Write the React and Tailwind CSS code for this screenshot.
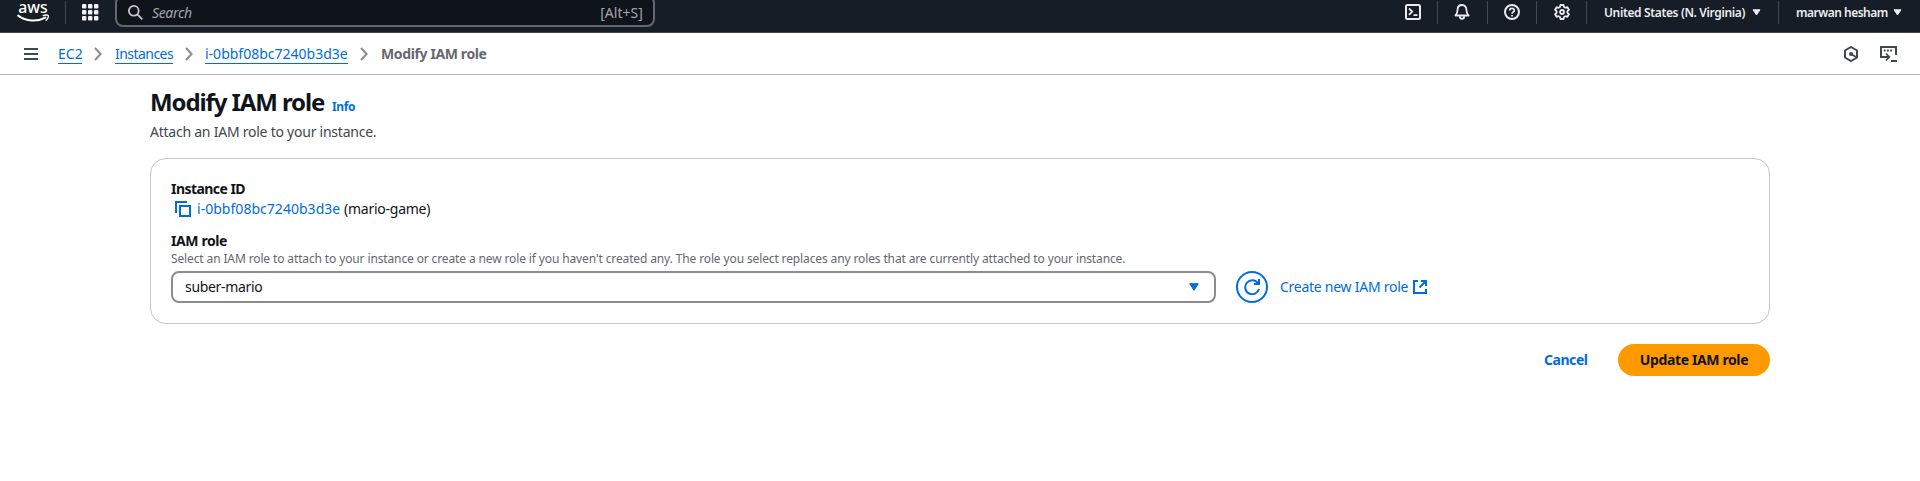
import React from "react";

function AwsLogo() {
  return (
    <svg width="32" height="24" viewBox="0 0 32 24" fill="none" className="block shrink-0">
      <text x="1.2" y="12.9" fontSize="12" transform="scale(1 1)" fontWeight="500" fontFamily="Noto Sans, sans-serif" fill="#fff" style={{ fontSize: "17px" }} textLength="29.500" lengthAdjust="spacingAndGlyphs">aws</text>
      <path d="M1.200 15.600C9 21.600 20.500 22 28.300 17.600" stroke="#fff" strokeWidth="2" strokeLinecap="round" />
      <path d="M26.200 15.700c2-.9 4.600-.9 5-.2.300.8-.5 3.300-2 4.800" stroke="#fff" strokeWidth="1.300" strokeLinecap="round" />
    </svg>
  );
}

function GridIcon() {
  const cells = [0, 6, 12];
  return (
    <svg width="17" height="17" viewBox="0 0 17 17" fill="#f3f3f7" className="block shrink-0">
      {cells.map((y) => cells.map((x) => <rect key={x + "-" + y} x={x} y={y} width="4.4" height="4.4" rx="1" />))}
    </svg>
  );
}

function Icon({ children, className = "" }) {
  return (
    <svg width="16" height="16" viewBox="0 0 16 16" fill="none" stroke="currentColor" strokeWidth="2" className={"block shrink-0 " + className}>
      {children}
    </svg>
  );
}

function Caret({ className = "" }) {
  return (
    <svg width="9" height="7" viewBox="0 0 9 7" className={"block shrink-0 " + className} fill="currentColor" stroke="currentColor" strokeLinejoin="round">
      <path d="M1 .8h7L4.5 6z" />
    </svg>
  );
}

function Chevron() {
  return (
    <svg width="8" height="14" viewBox="0 0 8 14" fill="none" stroke="#8c8c94" strokeWidth="2" className="block shrink-0">
      <path d="M1 1l5.6 6L1 13" />
    </svg>
  );
}

function NavDivider() {
  return <div className="h-[23px] w-px shrink-0 bg-[#424650]" />;
}

function TopNav() {
  return (
    <header className="h-[33px] overflow-hidden border-b border-[#424650] bg-[#161d26] text-[#ebebf0]">
      <div className="flex h-6 items-center">
        <div className="flex w-[65px] justify-start pl-[17px]"><AwsLogo /></div>
        <NavDivider />
        <div className="ml-4"><GridIcon /></div>
        <div className="-mt-[2px] ml-4 flex h-8 w-[540px] shrink-0 items-center rounded-lg border-2 border-[#656871] bg-[#0f141a] pr-[10px] pl-[11px]">
          <svg width="15" height="15" viewBox="0 0 15 15" fill="none" stroke="#c6c6cd" strokeWidth="1.8" className="mt-[2px] block">
            <circle cx="5.8" cy="5.8" r="4.9" />
            <path d="M9.4 9.4l4.9 4.9" />
          </svg>
          <span className="mt-[3px] ml-[9px] text-[14px] leading-5 tracking-[-0.35px] text-[#a4a4ad] italic">Search</span>
          <span className="mt-[3px] ml-auto text-[14px] leading-5 tracking-[0.05px] text-[#a4a4ad]">[Alt+S]</span>
        </div>
        <div className="ml-auto flex items-center">
          <Icon className="mr-4">
            <rect x="1" y="1" width="14" height="14" rx="1.5" />
            <path d="M4 4.5L7.2 7.6 4 10.8M8.5 11.2h4" strokeWidth="1.8" />
          </Icon>
          <NavDivider />
          <Icon className="mx-4">
            <path d="M8 1C5.2 1 3.6 3 3.6 5.6c0 3-.9 4.7-2.2 5.9h13.2c-1.3-1.2-2.2-2.9-2.2-5.9C12.4 3 10.8 1 8 1z" strokeLinejoin="round" strokeWidth="1.8" />
            <path d="M5.8 12.200c0 3.600 4.400 3.600 4.400 0" strokeWidth="1.8" />
          </Icon>
          <div className="w-px" />
          <NavDivider />
          <Icon className="mx-4">
            <circle cx="8" cy="8" r="7" />
            <path d="M5.700 6.600c0-3 4.600-3 4.600-.2C10.300 8 8 8 8 9.800" strokeWidth="1.7" />
            <path d="M8 10.900v1.700" strokeWidth="1.8" />
          </Icon>
          <NavDivider />
          <Icon className="mr-4 ml-[17px]">
            <path d="M6.500 1h3l.5 2 1.400.8 2-.6 1.500 2.600L13.400 7.200v1.600l1.500 1.400-1.500 2.600-2-.6-1.400.8-.5 2h-3L6 13l-1.400-.8-2 .6-1.500-2.600 1.500-1.400V7.200L1.100 5.800l1.500-2.600 2 .6L6 3z" strokeLinejoin="round" strokeWidth="1.8" />
            <circle cx="8" cy="8" r="2" strokeWidth="1.8" />
          </Icon>
          <NavDivider />
          <div className="flex w-[191px] items-center pl-[17px]">
            <span className="w-[142px] pt-px text-[12px] leading-4 font-semibold tracking-[-0.36px] whitespace-nowrap">United States (N. Virginia)</span>
            <Caret className="mt-px ml-[6px]" />
          </div>
          <NavDivider />
          <div className="flex w-[141px] items-center pl-[17px]">
            <span className="w-[91px] pt-px text-[12px] leading-4 font-semibold tracking-[-0.5px] whitespace-nowrap">marwan hesham</span>
            <Caret className="mt-px ml-[6px]" />
          </div>
        </div>
      </div>
    </header>
  );
}

function Breadcrumbs() {
  return (
    <div className="flex h-[42px] items-center border-b border-[#b4b4bb] bg-white pr-[23px] pl-6">
      <svg width="14" height="14" viewBox="0 0 14 14" stroke="#424650" strokeWidth="2" className="block shrink-0">
        <path d="M0 2h14M0 7h14M0 12h14" />
      </svg>
      <nav className="ml-5 flex items-center text-[14px] leading-5 whitespace-nowrap text-[#006ce0]">
        <a className="h-5 w-6 border-b border-[#006ce0] leading-5">EC2</a>
        <div className="w-[33px] pl-3"><Chevron /></div>
        <a className="h-5 w-[58px] border-b border-[#006ce0] leading-5 tracking-[-0.54px]">Instances</a>
        <div className="w-8 pl-3"><Chevron /></div>
        <a className="h-5 w-[143px] border-b border-[#006ce0] leading-5">i-0bbf08bc7240b3d3e</a>
        <div className="w-[33px] pl-3"><Chevron /></div>
        <span className="font-bold tracking-[-0.38px] text-[#656871]">Modify IAM role</span>
      </nav>
      <div className="ml-auto flex items-center gap-[21px] text-[#424650]">
        <Icon>
          <path d="M8 1l6 3.500v7L8 15l-6-3.500v-7z" />
          <circle cx="8" cy="8" r="2" fill="currentColor" stroke="none" />
          <path d="M8 8l5 3" />
        </Icon>
        <svg width="17" height="16" viewBox="0 0 17 16" fill="none" stroke="currentColor" strokeWidth="2" className="block">
          <path d="M4.500 11H1V1h15v8" />
          <path d="M3.800 4.500h1.800M7 4.500h1.800M10.200 4.500H12" />
          <path d="M4 11h5M6 7.500L9.300 11 6 14.500" strokeWidth="1.8" />
          <path d="M11 15h6" />
        </svg>
      </div>
    </div>
  );
}

function RoleForm() {
  return (
    <section className="mt-4 rounded-2xl border border-[#c6c6cd] bg-white p-5 text-[14px] leading-5 text-[#0f141a]">
      <div className="font-bold tracking-[-0.55px]">Instance ID</div>
      <div className="flex items-center pl-1 whitespace-nowrap">
        <Icon className="text-[#006ce0]">
          <path d="M1 12V1h11" />
          <path d="M5 5h10v10H5z" />
        </Icon>
        <a className="ml-[6px] w-[147px] tracking-[0.03px] text-[#006ce0]">i-0bbf08bc7240b3d3e</a>
        <span className="tracking-[-0.25px]">(mario-game)</span>
      </div>
      <div className="mt-3 font-bold tracking-[-0.4px]">IAM role</div>
      <div className="text-[12px] leading-4 tracking-[-0.127px] whitespace-nowrap text-[#656871]">
        Select an IAM role to attach to your instance or create a new role if you haven't created any. The role you select replaces any roles that are currently attached to your instance.
      </div>
      <div className="mt-1 flex items-center">
        <div className="flex h-8 w-[1045px] items-center justify-between rounded-lg border-2 border-[#8c8c94] pr-[15px] pl-3">
          <span className="tracking-[-0.33px]">suber-mario</span>
          <svg width="10" height="8" viewBox="0 0 10 8" fill="#006ce0" stroke="#006ce0" strokeLinejoin="round" className="block">
            <path d="M.7.7h8.600L5 7.300z" />
          </svg>
        </div>
        <button className="ml-5 flex size-8 items-center justify-center rounded-full border-2 border-[#006ce0] text-[#006ce0]">
          <Icon>
            <path d="M15 10a7 7 0 1 1-1-5.700" />
            <path d="M15 0v5h-5" />
          </Icon>
        </button>
        <a className="ml-[12px] flex items-center text-[#006ce0]">
          <span className="w-[133px] tracking-[-0.26px] whitespace-nowrap">Create new IAM role</span>
          <svg width="14" height="14" viewBox="0 0 14 14" fill="none" stroke="currentColor" strokeWidth="2" className="block">
            <path d="M5 1H1v12h12V9" />
            <path d="M8 1h5v5M13 1L6.500 7.500" />
          </svg>
        </a>
      </div>
    </section>
  );
}

export default function App() {
  return (
    <div className="min-h-[481px] bg-white font-['Noto_Sans',sans-serif]">
      <TopNav />
      <Breadcrumbs />
      <main className="mx-auto w-[1620px] pt-3">
        <div className="flex items-baseline">
          <h1 className="w-[182px] text-[24px] leading-[30px] font-bold tracking-[-1.1px] whitespace-nowrap text-[#0f141a]">Modify IAM role</h1>
          <a className="text-[12px] leading-4 font-bold tracking-[-0.35px] text-[#006ce0]">Info</a>
        </div>
        <p className="mt-[5px] text-[14px] leading-5 tracking-[-0.24px] text-[#424650]">Attach an IAM role to your instance.</p>
        <RoleForm />
        <div className="mt-5 flex h-8 items-center justify-end text-[14px] leading-5 font-bold">
          <button className="w-[74px] text-left tracking-[-0.45px] text-[#006ce0]">Cancel</button>
          <button className="h-8 w-[152px] rounded-full bg-[#ff9900] tracking-[-0.38px] text-[#0f141a]">Update IAM role</button>
        </div>
      </main>
    </div>
  );
}
